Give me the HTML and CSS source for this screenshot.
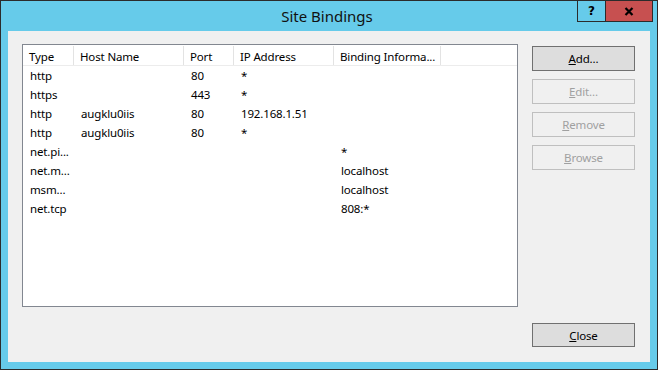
FILE: index.html
```html
<!DOCTYPE html>
<html lang="en">
<head>
    <meta charset="UTF-8">
    <title>Site Bindings</title>
    <link rel="stylesheet" href="styles.css">
</head>
<body>

<div class="window">
    <div class="titlebar">
        <span></span>
        <div class="title">Site Bindings</div>
        <div class="controls">
            <div class="ctl help">?</div>
            <div class="ctl close">
                <svg width="10" height="9" viewBox="0 0 10 9"><path d="M1.5 1 L8.5 8 M8.5 1 L1.5 8" stroke="#000" stroke-width="2.2"/></svg>
            </div>
        </div>
    </div>

    <div class="client">
        <div class="listbox">
            <div class="row head">
                <div class="cell">Type</div>
                <div class="cell">Host Name</div>
                <div class="cell">Port</div>
                <div class="cell">IP Address</div>
                <div class="cell">Binding Informa...</div>
            </div>
            <div class="row"><div class="cell">http</div><div class="cell"></div><div class="cell">80</div><div class="cell">*</div><div class="cell"></div></div>
            <div class="row"><div class="cell">https</div><div class="cell"></div><div class="cell">443</div><div class="cell">*</div><div class="cell"></div></div>
            <div class="row"><div class="cell">http</div><div class="cell">augklu0iis</div><div class="cell">80</div><div class="cell">192.168.1.51</div><div class="cell"></div></div>
            <div class="row"><div class="cell">http</div><div class="cell">augklu0iis</div><div class="cell">80</div><div class="cell">*</div><div class="cell"></div></div>
            <div class="row"><div class="cell">net.pi...</div><div class="cell"></div><div class="cell"></div><div class="cell"></div><div class="cell">*</div></div>
            <div class="row"><div class="cell">net.m...</div><div class="cell"></div><div class="cell"></div><div class="cell"></div><div class="cell">localhost</div></div>
            <div class="row"><div class="cell">msm...</div><div class="cell"></div><div class="cell"></div><div class="cell"></div><div class="cell">localhost</div></div>
            <div class="row"><div class="cell">net.tcp</div><div class="cell"></div><div class="cell"></div><div class="cell"></div><div class="cell">808:*</div></div>
        </div>

        <div class="actions">
            <button class="btn default"><u>A</u>dd...</button>
            <button class="btn" disabled><u>E</u>dit...</button>
            <button class="btn" disabled><u>R</u>emove</button>
            <button class="btn" disabled><u>B</u>rowse</button>
            <button class="btn default bottom"><u>C</u>lose</button>
        </div>
    </div>
</div>

</body>
</html>
```

FILE: styles.css
```css
body {
    margin: 0;
    font-family: "Noto Sans", "Open Sans", sans-serif;
    font-size: 11.5px;
    letter-spacing: -0.15px;
    color: #000;
}
.window {
    width: 658px;
    height: 370px;
    box-sizing: border-box;
    border: 1px solid #2b2b2b;
    background-color: #66cbea; /* plavi okvir */
    padding: 0 7px 7px 7px;
    display: flex;
    flex-direction: column;
}
.titlebar {
    height: 30px;
    margin: 0 -7px;
    padding-right: 4px;
    display: grid;
    grid-template-columns: 1fr auto 1fr;
    align-items: start;
}
.title {
    font-size: 15px;
    letter-spacing: 0;
    line-height: 30px;
    color: #111;
}
.controls {
    justify-self: end;
    display: flex;
    border: 1px solid #2b2b2b;
    border-top: none;
}
.ctl {
    height: 20px;
    display: flex;
    align-items: center;
    justify-content: center;
}
.help {
    width: 27px;
    border-right: 1px solid #2b2b2b;
    font-family: "DejaVu Sans", sans-serif;
    font-weight: bold;
    font-size: 12px;
    letter-spacing: 0;
}
.close {
    width: 46px;
    background-color: #c75050;
}
.client {
    flex: 1;
    background-color: #f0f0f0;
    padding: 13px 15px 15px 14px;
    display: flex;
    align-items: flex-start;
    gap: 14px;
}
.listbox {
    width: 496px;
    height: 263px;
    box-sizing: border-box;
    border: 1px solid #828790;
    background-color: #fff;
    padding-top: 2px;
}
.row {
    display: grid;
    grid-template-columns: 51px 110px 50px 100px 107px;
    height: 19px;
    line-height: 19px;
}
.row.head {
    height: 20px;
    line-height: 19px;
    border-bottom: 1px solid #ececec;
    box-sizing: border-box;
    margin-top: -1px;
}
.cell {
    padding-left: 7px;
    white-space: nowrap;
    overflow: hidden;
}
.head .cell {
    border-right: 1px solid #e3e3e3;
    padding-left: 6px;
    padding-top: 1px;
}
.actions {
    align-self: stretch;
    display: flex;
    flex-direction: column;
    gap: 8px;
    padding-top: 2px;
}
.btn {
    width: 103px;
    height: 25px;
    font: inherit;
    letter-spacing: inherit;
    background-color: #f0f0f0;
    border: 1px solid #bfbfbf;
    color: #a0a0a0;
    padding: 0;
}
.btn.default {
    background-color: #dddddd;
    border-color: #707070;
    color: #000;
}
.btn.bottom {
    margin-top: auto;
    height: 24px;
}
```
